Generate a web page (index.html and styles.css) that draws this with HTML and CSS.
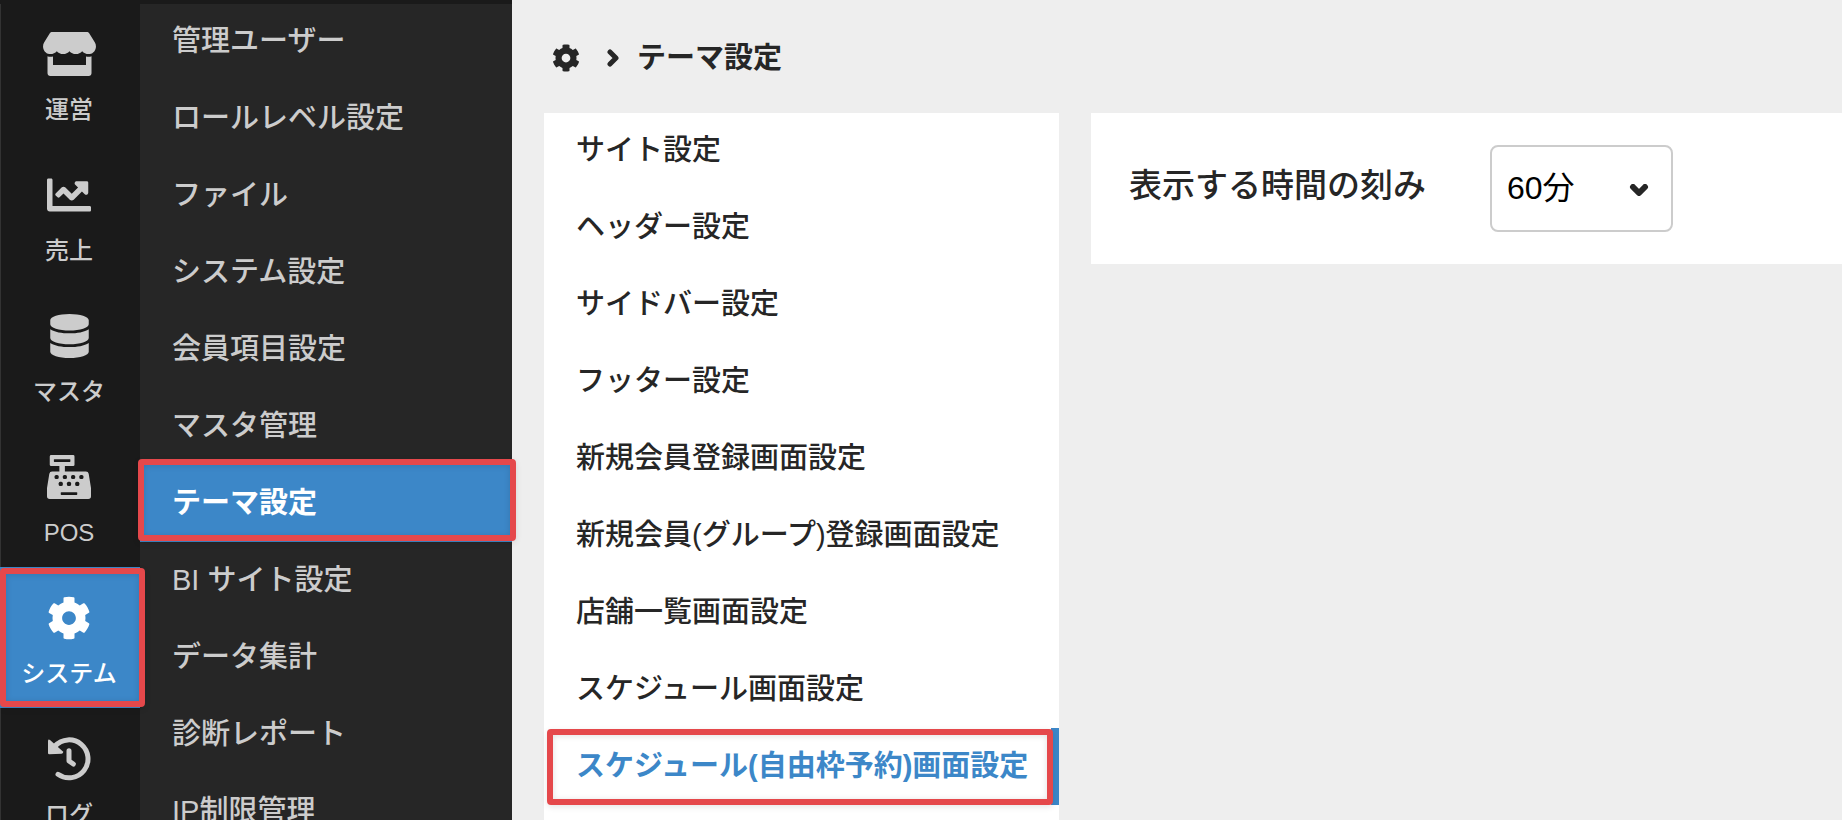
FILE: index.html
```html
<!DOCTYPE html>
<html lang="ja">
<head>
<meta charset="utf-8">
<title>テーマ設定</title>
<link rel="stylesheet" href="styles.css">
</head>
<body>
<svg class="sprite" aria-hidden="true">
  <symbol id="icon-gear" viewBox="0 0 512 512"><path d="M487.4 315.7l-42.6-24.6c4.3-23.2 4.3-47 0-70.2l42.6-24.6c4.9-2.8 7.1-8.6 5.5-14-11.1-35.6-30-67.8-54.7-94.6-3.8-4.1-10-5.1-14.8-2.3L380.8 110c-17.9-15.4-38.5-27.3-60.8-35.1V25.8c0-5.6-3.9-10.5-9.4-11.7-36.7-8.2-74.3-7.8-109.2 0-5.5 1.2-9.4 6.1-9.4 11.7V75c-22.2 7.9-42.8 19.8-60.8 35.1L88.7 85.5c-4.9-2.8-11-1.9-14.8 2.3-24.7 26.7-43.6 58.9-54.7 94.6-1.7 5.4.6 11.2 5.5 14L67.3 221c-4.3 23.2-4.3 47 0 70.2l-42.6 24.6c-4.9 2.8-7.1 8.6-5.5 14 11.1 35.6 30 67.8 54.7 94.6 3.8 4.1 10 5.1 14.8 2.3l42.6-24.6c17.9 15.4 38.5 27.3 60.8 35.1v49.2c0 5.6 3.9 10.5 9.4 11.7 36.7 8.2 74.3 7.8 109.2 0 5.5-1.2 9.4-6.1 9.4-11.7v-49.2c22.2-7.9 42.8-19.8 60.8-35.1l42.6 24.6c4.9 2.8 11 1.9 14.8-2.3 24.7-26.7 43.6-58.9 54.7-94.6 1.5-5.5-.7-11.3-5.6-14.1zM256 336c-44.1 0-80-35.9-80-80s35.9-80 80-80 80 35.9 80 80-35.9 80-80 80z"/></symbol>
</svg>
<div class="app">
  <div class="sidebar">
    <nav class="rail" aria-label="メイン">
      <ul class="rail-list">
        <li><a class="rail-item" href="#">
          <span class="rail-icon"><svg width="53" height="44" viewBox="0 0 616 512"><path d="M602 118.6L537.1 15C531.3 5.7 521 0 510 0H106C95 0 84.7 5.7 78.9 15L14 118.6c-33.5 53.5-3.8 127.9 58.8 136.4 4.5.6 9.1.9 13.7.9 29.6 0 55.8-13 73.8-33.1 18 20.1 44.3 33.1 73.8 33.1 29.6 0 55.8-13 73.8-33.1 18 20.1 44.3 33.1 73.8 33.1 29.6 0 55.8-13 73.8-33.1 18.1 20.1 44.3 33.1 73.8 33.1 4.7 0 9.2-.3 13.7-.9 62.8-8.4 92.6-82.8 59-136.4zM529.5 288c-10 0-19.9-1.5-29.5-3.8V384H116v-99.8c-9.6 2.2-19.5 3.8-29.5 3.8-6 0-12.1-.4-18-1.2-5.6-.8-11.1-2.1-16.4-3.6V480c0 17.7 14.3 32 32 32h448c17.7 0 32-14.3 32-32V283.2c-5.4 1.6-10.8 2.9-16.4 3.6-6.1.8-12.1 1.2-18.2 1.2z"/></svg></span>
          <span>運営</span></a></li>
        <li><a class="rail-item" href="#">
          <span class="rail-icon"><svg width="44" height="44" viewBox="0 0 512 512"><path d="M496 384H64V80c0-8.84-7.16-16-16-16H16C7.16 64 0 71.16 0 80v336c0 17.67 14.33 32 32 32h464c8.84 0 16-7.16 16-16v-32c0-8.84-7.16-16-16-16zM464 96H345.94c-21.38 0-32.09 25.85-16.97 40.97l32.4 32.4L288 242.75l-73.37-73.37c-12.5-12.5-32.76-12.5-45.25 0l-68.69 68.69c-6.25 6.25-6.25 16.38 0 22.63l22.62 22.62c6.25 6.25 16.38 6.25 22.63 0L192 237.25l73.37 73.37c12.5 12.5 32.76 12.5 45.25 0l96-96 32.4 32.4c15.12 15.12 40.97 4.41 40.97-16.97V112c.01-8.84-7.15-16-15.99-16z"/></svg></span>
          <span>売上</span></a></li>
        <li><a class="rail-item" href="#">
          <span class="rail-icon"><svg width="39" height="44" viewBox="0 0 448 512"><path d="M448 73.143v45.714C448 159.143 347.667 192 224 192S0 159.143 0 118.857V73.143C0 32.857 100.333 0 224 0s224 32.857 224 73.143zM448 176v102.857C448 319.143 347.667 352 224 352S0 319.143 0 278.857V176c48.125 33.143 136.208 48.572 224 48.572S399.874 209.143 448 176zm0 160v102.857C448 479.143 347.667 512 224 512S0 479.143 0 438.857V336c48.125 33.143 136.208 48.572 224 48.572S399.874 369.143 448 336z"/></svg></span>
          <span>マスタ</span></a></li>
        <li><a class="rail-item" href="#">
          <span class="rail-icon"><svg width="44" height="44" viewBox="0 0 512 512"><path d="M48 0h256q16 0 16 16v96q0 16-16 16h-96v64h245q27 0 32 27l26 160q1 6 1 12v89q0 32-32 32H32q-32 0-32-32v-89q0-6 1-12l26-160q5-27 32-27h85v-64H48q-16 0-16-16V16Q32 0 48 0z"/><g class="cutout"><rect x="80" y="48" width="192" height="32" rx="6"/><rect x="88" y="232" width="48" height="48" rx="18"/><rect x="184" y="232" width="48" height="48" rx="18"/><rect x="280" y="232" width="48" height="48" rx="18"/><rect x="376" y="232" width="48" height="48" rx="18"/><rect x="136" y="312" width="48" height="48" rx="18"/><rect x="232" y="312" width="48" height="48" rx="18"/><rect x="328" y="312" width="48" height="48" rx="18"/><rect x="160" y="432" width="192" height="32" rx="8"/></g></svg></span>
          <span>POS</span></a></li>
        <li><a class="rail-item is-active" href="#" aria-current="true">
          <span class="rail-icon"><svg width="44" height="44"><use href="#icon-gear"/></svg></span>
          <span>システム</span></a></li>
        <li><a class="rail-item" href="#">
          <span class="rail-icon"><svg width="44" height="44" viewBox="142 559 132 132"><path class="stroke" d="M166 586A57 57 0 1 1 175 671M208 600V631L221 640"/><path d="M145 570Q146 564 151 568L189 602Q193 608 186 609L149 611Q145 611 145 607z"/></svg></span>
          <span>ログ</span></a></li>
      </ul>
    </nav>
    <nav class="submenu" aria-label="システム">
      <ul class="menu-list">
        <li><a class="menu-item" href="#">管理ユーザー</a></li>
        <li><a class="menu-item" href="#">ロールレベル設定</a></li>
        <li><a class="menu-item" href="#">ファイル</a></li>
        <li><a class="menu-item" href="#">システム設定</a></li>
        <li><a class="menu-item" href="#">会員項目設定</a></li>
        <li><a class="menu-item" href="#">マスタ管理</a></li>
        <li><a class="menu-item is-active" href="#" aria-current="page">テーマ設定</a></li>
        <li><a class="menu-item" href="#">BI サイト設定</a></li>
        <li><a class="menu-item" href="#">データ集計</a></li>
        <li><a class="menu-item" href="#">診断レポート</a></li>
        <li><a class="menu-item" href="#">IP制限管理</a></li>
      </ul>
    </nav>
  </div>
  <main class="main">
    <header class="breadcrumb">
      <a class="breadcrumb-home" href="#" aria-label="システム"><svg width="28" height="28"><use href="#icon-gear"/></svg></a>
      <svg class="chevron" width="12" height="18" viewBox="0 0 12 18"><path d="M3 3L9 9L3 15"/></svg>
      <h1 class="breadcrumb-title">テーマ設定</h1>
    </header>
    <div class="columns">
      <nav class="panel" aria-label="テーマ設定">
        <ul class="menu-list">
          <li><a class="menu-item" href="#">サイト設定</a></li>
          <li><a class="menu-item" href="#">ヘッダー設定</a></li>
          <li><a class="menu-item" href="#">サイドバー設定</a></li>
          <li><a class="menu-item" href="#">フッター設定</a></li>
          <li><a class="menu-item" href="#">新規会員登録画面設定</a></li>
          <li><a class="menu-item" href="#">新規会員(グループ)登録画面設定</a></li>
          <li><a class="menu-item" href="#">店舗一覧画面設定</a></li>
          <li><a class="menu-item" href="#">スケジュール画面設定</a></li>
          <li><a class="menu-item is-active" href="#" aria-current="page">スケジュール(自由枠予約)画面設定</a></li>
        </ul>
      </nav>
      <form class="card">
        <label class="field-label" for="interval">表示する時間の刻み</label>
        <div class="select-box">
          <select class="select" id="interval"><option>60分</option></select>
          <svg class="chevron select-arrow" width="20" height="12" viewBox="0 0 20 12"><path d="M4 3L10 9L16 3"/></svg>
        </div>
      </form>
    </div>
  </main>
</div>
</body>
</html>
```

FILE: styles.css
```css
* {
  box-sizing: border-box;
}

body {
  margin: 0;
  background: #eeeeee;
  color: #262626;
  font-family: "Liberation Sans", "Noto Sans CJK JP", sans-serif;
  font-size: 29px;
  font-weight: 500;
}

a {
  color: inherit;
  text-decoration: none;
}

ul {
  margin: 0;
  padding: 0;
  list-style: none;
}

svg {
  display: block;
  fill: currentColor;
}

.sprite {
  position: absolute;
  width: 0;
  height: 0;
}

.app {
  display: flex;
  height: 100vh;
  overflow: hidden;
}

/* Sidebar */
.sidebar {
  display: flex;
  flex: none;
  padding-top: 4px;
  background: #1a1a1a;
  color: #cccccc;
}

.rail {
  display: flex;
  flex-direction: column;
  width: 140px;
  background: linear-gradient(#333333, #333333) left / 1px 100% no-repeat;
}

.rail-list,
.menu-list {
  margin-top: -1px;
}

.rail-item {
  position: relative;
  display: flex;
  flex-direction: column;
  align-items: center;
  gap: 14px;
  padding: 27px 2px 16px 0;
  font-size: 24px;
  line-height: 36px;
}

.rail-icon {
  display: flex;
  align-items: center;
  justify-content: center;
  height: 48px;
}

.rail-item.is-active,
.submenu .is-active {
  background: #3c87c8;
  color: #ffffff;
}

.cutout {
  fill: #1a1a1a;
}

.stroke {
  fill: none;
  stroke: currentColor;
  stroke-width: 15;
  stroke-linecap: round;
  stroke-linejoin: round;
}

.submenu {
  display: flex;
  flex-direction: column;
  width: 372px;
  background: #262626;
}

.menu-item {
  position: relative;
  display: block;
  padding-left: 32px;
  line-height: 77px;
  white-space: nowrap;
}

.menu-item.is-active {
  font-weight: bold;
}

/* Red highlight frames */
.is-active::after {
  content: "";
  position: absolute;
  z-index: 2;
  border: 6px solid #e5484b;
  border-radius: 4px;
  box-shadow: 0 2px 6px rgba(0, 0, 0, 0.1), inset 0 1px 6px rgba(0, 0, 0, 0.12);
  pointer-events: none;
}

.rail-item.is-active::after {
  inset: 1px -5px 1px 0;
}

.submenu .is-active::after {
  inset: -6px -4px 1px -2px;
}

/* Main area */
.main {
  display: flex;
  flex: 1;
  flex-direction: column;
  min-width: 0;
  padding-left: 32px;
}

.breadcrumb {
  display: flex;
  align-items: center;
  padding: 34px 8px 31px;
}

.breadcrumb-home {
  margin-right: 27px;
}

.breadcrumb-title {
  margin: 0 0 0 18px;
  font-size: 29px;
  line-height: 48px;
}

.chevron {
  fill: none;
  stroke: currentColor;
  stroke-width: 5;
  stroke-linecap: round;
  stroke-linejoin: round;
}

.columns {
  display: flex;
  flex: 1;
  gap: 32px;
}

.panel {
  display: flex;
  flex: 0 0 515px;
  flex-direction: column;
  background: #ffffff;
}

.panel .is-active {
  border-right: 8px solid #3c87c8;
  color: #3c87c8;
}

.panel .is-active::after {
  inset: 1px -2px 0 3px;
}

.card {
  display: flex;
  flex: 1;
  align-items: flex-start;
  align-self: flex-start;
  gap: 64px;
  padding: 32px 38px;
  background: #ffffff;
}

.field-label {
  font-size: 33px;
  line-height: 82px;
  white-space: nowrap;
}

.select-box {
  position: relative;
}

.select {
  display: block;
  width: 183px;
  height: 87px;
  padding: 0 48px 2px 15px;
  appearance: none;
  border: 2px solid #cccccc;
  border-radius: 8px;
  background: #ffffff;
  color: #000000;
  font-family: inherit;
  font-size: 32px;
}

.select-arrow {
  position: absolute;
  top: 39px;
  right: 24px;
  color: #262626;
  stroke-width: 6;
  pointer-events: none;
}
```
